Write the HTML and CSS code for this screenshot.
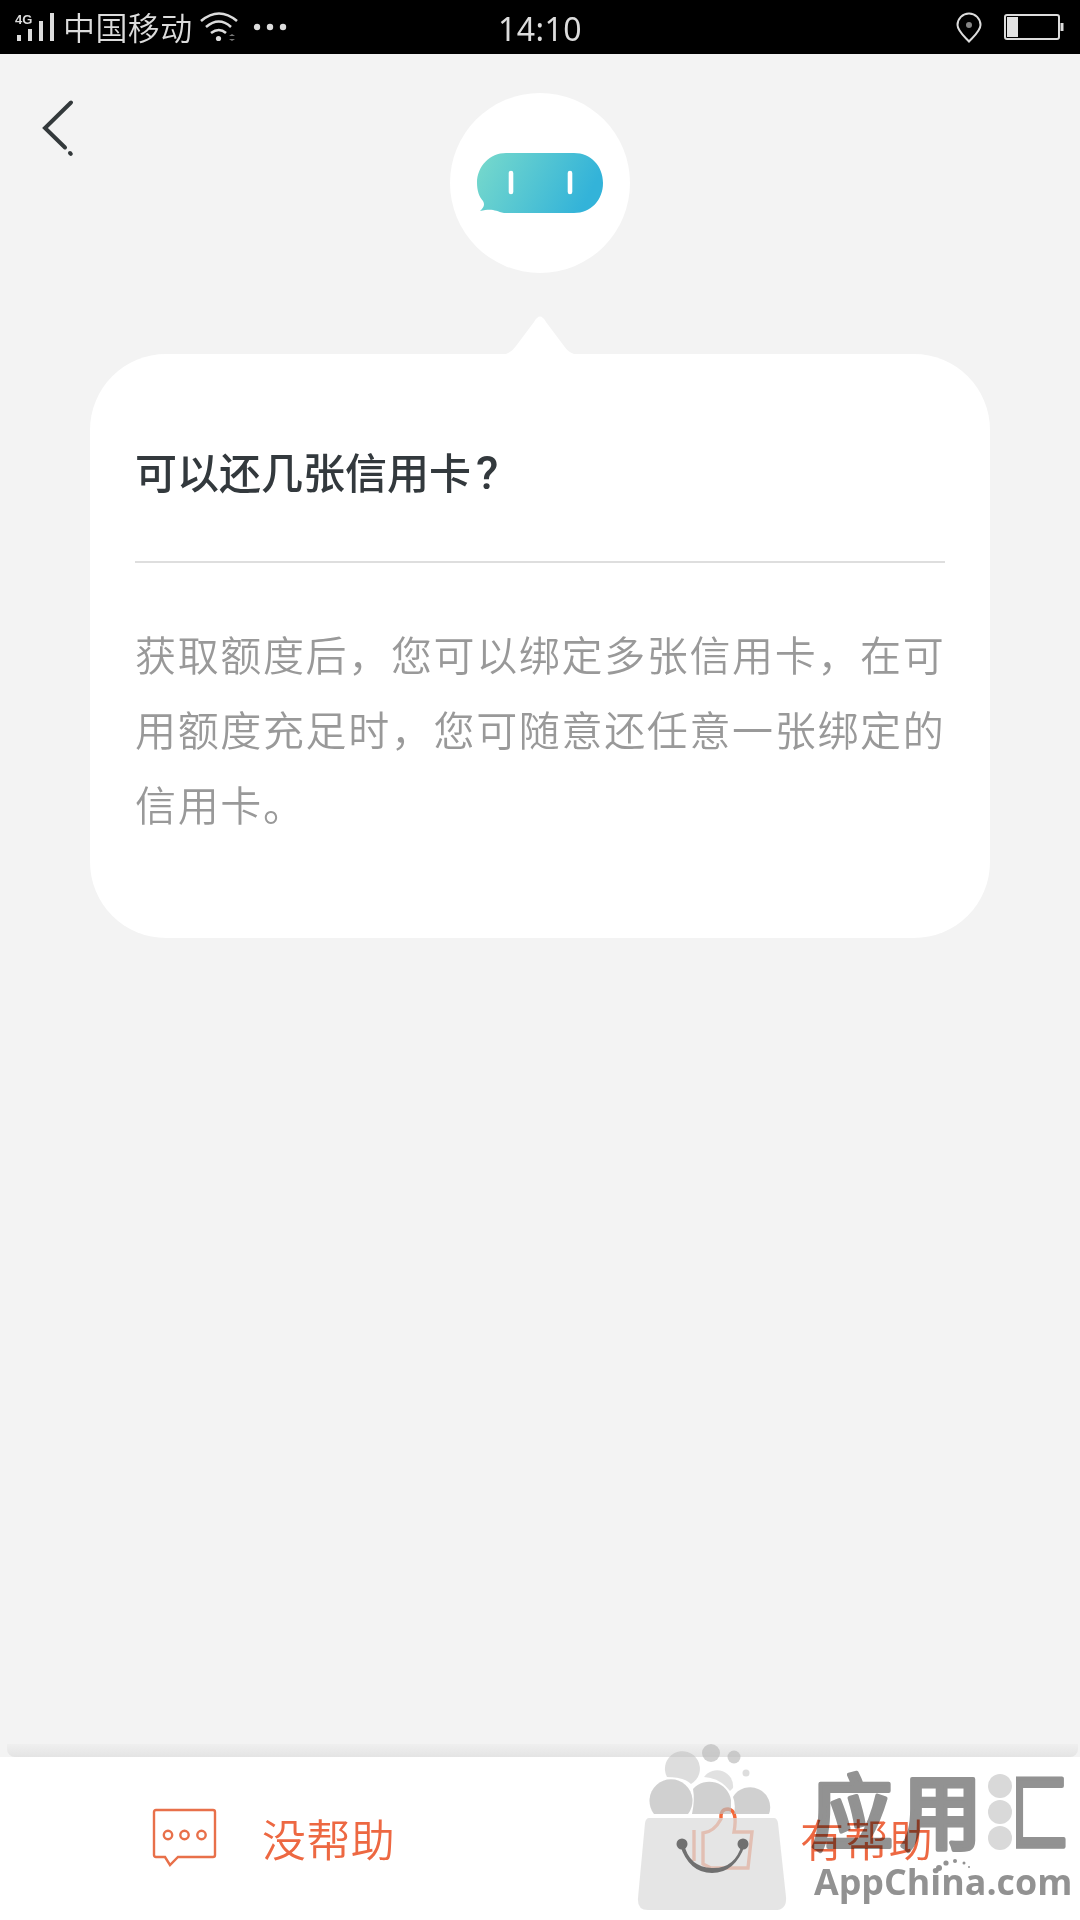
FILE: index.html
```html
<!DOCTYPE html>
<html lang="zh-CN">
<head>
<meta charset="UTF-8">
<meta name="viewport" content="width=device-width, initial-scale=1.0">
<title>可以还几张信用卡?</title>
<link rel="stylesheet" href="styles.css">
</head>
<body>

<header class="status-bar">
    <div class="status-left">
        <svg class="signal" width="46" height="54" viewBox="0 0 46 54" fill="#dcdcdc">
            <text class="network" x="0" y="24">4G</text>
            <rect x="2" y="35" width="4" height="6"/>
            <rect x="13" y="29" width="4" height="12"/>
            <rect x="24" y="21" width="4" height="20"/>
            <rect x="35" y="13" width="4" height="28"/>
        </svg>
        <span class="carrier">中国移动</span>
        <svg width="92" height="54" viewBox="198 0 92 54" fill="none" stroke="#dcdcdc" stroke-width="2.6">
            <path d="M201 21Q219 6 237 21M206 27Q219 16 231 27M211 33Q219 27 226 33"/>
            <circle cx="218.500" cy="38.500" r="2.600" fill="#dcdcdc" stroke="none"/>
            <path d="M229 36l3-2 3 2zM229 39l3 2 3-2z" fill="#777" stroke="none"/>
            <g fill="#dcdcdc" stroke="none">
                <circle cx="257" cy="27" r="3.200"/>
                <circle cx="270" cy="27" r="3.200"/>
                <circle cx="283" cy="27" r="3.200"/>
            </g>
        </svg>
    </div>
    <span class="time">14:10</span>
    <div class="status-right">
        <svg width="110" height="54" viewBox="955 0 110 54" fill="none" stroke="#dcdcdc" stroke-width="2">
            <path d="M969 41.500C965 37 957.500 31 957.500 25A11.500 11.500 0 0 1 980.500 25C980.500 31 973 37 969 41.500Z"/>
            <circle cx="969" cy="25" r="3" fill="#858585" stroke="none"/>
            <rect x="1005" y="15" width="54" height="24" rx="2"/>
            <rect x="1007" y="17" width="11" height="20" fill="#e2e2e2" stroke="none"/>
            <path d="M1062 23v8" stroke-width="3"/>
        </svg>
    </div>
</header>

<main class="page">
    <nav class="top">
        <a class="back" href="#">
            <svg width="40" height="62" viewBox="40 97 40 62" fill="none" stroke="#33393b" stroke-width="4" stroke-linecap="round">
                <path d="M71 102.500L45 128L65 147.500"/>
                <path d="M70 153l.8.800"/>
            </svg>
        </a>
        <div class="avatar">
            <svg width="126" height="60" viewBox="477 153 126 60">
                <defs>
                    <linearGradient id="robot" x1="0" y1="0" x2="1" y2=".25">
                        <stop offset="0.05" stop-color="#75d8cc"/>
                        <stop offset="1" stop-color="#33b3d9"/>
                    </linearGradient>
                </defs>
                <path fill="url(#robot)" d="M506 153H574C591 153 603 166 603 183S591 213 574 213H504C495 211 493 208 480 211Q486 206 483 201C479 197 477 190 477 183C477 166 490 153 506 153Z"/>
                <path d="M511 173v19M570 173v19" stroke="#fff" stroke-width="4.600" stroke-linecap="round"/>
            </svg>
        </div>
    </nav>

    <svg class="pointer" width="68" height="40" viewBox="0 0 68 40">
        <path fill="#fff" d="M0 40Q6 38 10 32L28 8Q34-3 40 8L58 32Q62 38 68 40Z"/>
    </svg>
    <article class="bubble">
        <h1>可以还几张信用卡<span>?</span></h1>
        <p>获取额度后，您可以绑定多张信用卡，在可用额度充足时，您可随意还任意一张绑定的信用卡。</p>
    </article>
</main>

<div class="footer-shadow"></div>
<footer class="feedback">
    <button class="choice">
        <svg width="64" height="60" viewBox="0 0 64 60" fill="none" stroke="#e8704a" stroke-width="2.400">
            <path d="M3 2H60Q62 2 62 4V47Q62 49 60 49H25L17 57L12 49H3Q1 49 1 47V4Q1 2 3 2Z"/>
            <circle cx="15" cy="27" r="4.200"/>
            <circle cx="31.500" cy="27" r="4.200"/>
            <circle cx="48.500" cy="27" r="4.200"/>
        </svg>
        <span>没帮助</span>
    </button>
    <button class="choice">
        <svg width="64" height="66" viewBox="689 1805 64 66" fill="none" stroke="#f4693a" stroke-width="3.400">
            <path d="M694 1830V1861M703 1833V1864L711 1868H748L752 1832H734Q738 1810 728 1809Q720 1809 721 1819Q714 1832 703 1833Z"/>
        </svg>
        <span>有帮助</span>
    </button>
</footer>

<div class="watermark">
    <svg width="150" height="170" viewBox="636 1742 150 170">
        <g fill="#bcbcbc" fill-opacity=".7">
            <path d="M654 1814A21.500 21.500 0 1 1 688 1814Z"/>
            <path d="M692 1814Q695 1800 693 1789A22 22 0 0 1 731 1800V1814Z"/>
            <path d="M734 1814Q736 1804 733 1797A20 20 0 0 1 769 1814Z"/>
            <path d="M667 1777A17.500 17.500 0 1 1 691 1784Q684 1777 667 1777Z" fill-opacity=".5"/>
            <path d="M704 1777A16 16 0 0 1 733 1788L730 1791Q720 1778 704 1777Z" fill-opacity=".45"/>
            <circle cx="711" cy="1753" r="9"/>
            <circle cx="734" cy="1757" r="6.500"/>
            <circle cx="746" cy="1773" r="3.500" fill-opacity=".5"/>
        </g>
        <path fill="#dcdcdc" fill-opacity=".75" d="M649 1818H774Q777 1818 778 1823L786 1897Q787 1910 775 1910H648Q637 1910 638 1898L645 1823Q646 1818 649 1818Z"/>
        <g fill="#707070">
            <circle cx="682" cy="1844" r="5.500"/>
            <circle cx="743" cy="1844" r="5.500"/>
            <path d="M680 1845Q689 1873 712 1873T745 1845L742 1844Q735 1869 712 1868T684 1844Z"/>
        </g>
    </svg>
</div>
<div class="brand">
    <svg width="274" height="112" viewBox="806 1760 274 112">
        <defs>
            <clipPath id="right-part">
                <rect x="1016" y="1760" width="64" height="100"/>
            </clipPath>
        </defs>
        <g class="brand-name">
            <text x="811" y="1843">应</text>
            <text x="900" y="1843">用</text>
            <g clip-path="url(#right-part)">
                <text x="985" y="1843">汇</text>
            </g>
        </g>
        <g fill="#d9d9d9">
            <circle cx="1000" cy="1786" r="12"/>
            <circle cx="1000" cy="1812" r="12"/>
            <circle cx="1000" cy="1838" r="12"/>
        </g>
        <g fill="#929292">
            <circle cx="939" cy="1868" r="3"/>
            <circle cx="946" cy="1863" r="2.600"/>
            <circle cx="955" cy="1861" r="2"/>
            <circle cx="964" cy="1863" r="1.500"/>
            <circle cx="969" cy="1867" r="1"/>
        </g>
    </svg>
    <div class="brand-url">AppChina.com</div>
</div>

</body>
</html>
```
FILE: styles.css
```css
* {
    box-sizing: border-box;
}

body {
    display: flex;
    flex-direction: column;
    height: 1920px;
    margin: 0;
    background-color: #f3f3f3;
    font-family: "Noto Sans CJK SC", sans-serif;
    overflow: hidden;
}

svg {
    display: block;
    flex: none;
    overflow: visible;
}

.status-bar {
    display: grid;
    grid-template-columns: 1fr auto 1fr;
    height: 54px;
    padding: 0 15px;
    background-color: #000;
    color: #dcdcdc;
    line-height: 52px;
}

.status-left {
    display: flex;
}

.network {
    font: bold 13px "Liberation Sans", sans-serif;
}

.carrier {
    width: 137px;
    padding-left: 2px;
    font-size: 32px;
    font-weight: 350;
    letter-spacing: 0.4px;
    white-space: nowrap;
}

.time {
    font-family: "Noto Sans", sans-serif;
    font-size: 32px;
    font-weight: 400;
    letter-spacing: 0.4px;
    line-height: 58px;
}

.status-right {
    display: flex;
    justify-content: flex-end;
}

.page {
    flex: 1;
}

.top {
    display: grid;
    grid-template-columns: 1fr 180px 1fr;
    padding-top: 39px;
}

.back {
    padding: 4px 0 0 40px;
}

.avatar {
    display: flex;
    align-items: center;
    justify-content: center;
    width: 180px;
    height: 180px;
    border-radius: 50%;
    background-color: #fff;
}

.pointer {
    margin: 41px auto 0;
}

.bubble {
    width: 900px;
    height: 584px;
    margin: 0 auto;
    padding: 0 45px;
    border-radius: 76px;
    background-color: #fff;
}

.bubble h1 {
    height: 209px;
    margin: 0;
    padding-top: 86px;
    border-bottom: 2px solid #dedede;
    color: #33393d;
    font-size: 42px;
    font-weight: 500;
    line-height: 62px;
}

.bubble h1 span {
    padding-left: 5px;
    font-family: Roboto, sans-serif;
    font-size: 46px;
}

.bubble p {
    width: 820px;
    margin: 53px 0 0;
    color: #999;
    font-size: 41px;
    font-weight: 350;
    letter-spacing: 1.65px;
    line-height: 75px;
}

.footer-shadow {
    height: 13px;
    margin: 0 2px 0 7px;
    border-radius: 0 0 8px 8px;
    background: linear-gradient(#efefef, #e4e4e4);
}

.feedback {
    display: grid;
    grid-template-columns: 1fr 1fr;
    height: 163px;
    background-color: #fff;
}

.choice {
    display: flex;
    align-items: center;
    gap: 45px;
    padding: 0 0 1px 153px;
    border: none;
    background: none;
    color: #ed6842;
    font-family: inherit;
    font-size: 44px;
    font-weight: 350;
    letter-spacing: 0.4px;
}

.choice:last-child {
    gap: 47px;
    padding-left: 149px;
}

/* stamp over the bottom right corner */
.watermark {
    position: absolute;
    right: 294px;
    bottom: 8px;
}

.brand {
    position: absolute;
    right: 0;
    bottom: 8px;
    width: 274px;
    height: 152px;
    color: #929292;
    white-space: nowrap;
    mix-blend-mode: multiply;
}

.brand-name {
    fill: #929292;
    stroke: #929292;
    stroke-width: 4px;
    stroke-linejoin: round;
    font-size: 82px;
    font-weight: 500;
}

.brand-url {
    margin-top: -12px;
    padding-left: 8px;
    font-family: "Open Sans", sans-serif;
    font-size: 35.8px;
    font-weight: 700;
    line-height: 42px;
}
```
